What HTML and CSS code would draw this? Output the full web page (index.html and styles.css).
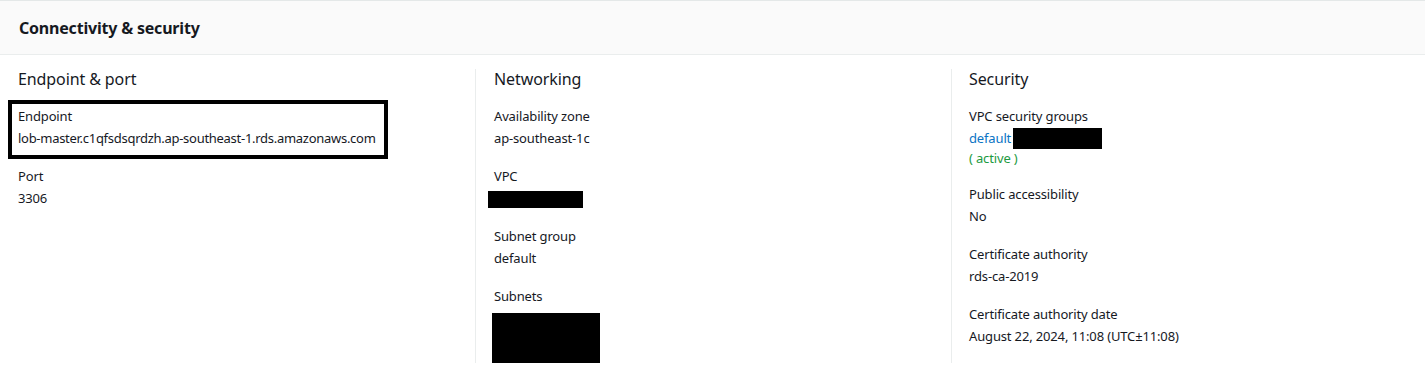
FILE: index.html
```html
<!DOCTYPE html>
<html>
<head>
<meta charset="utf-8">
<link rel="stylesheet" href="styles.css">
</head>
<body>
<div class="panel">
  <div class="panel-header"><h2>Connectivity &amp; security</h2></div>
  <div class="columns">
    <div class="col">
      <h3>Endpoint &amp; port</h3>
      <div class="item highlight">
        <div class="label">Endpoint</div>
        <div class="value endpoint">lob-master.c1qfsdsqrdzh.ap-southeast-1.rds.amazonaws.com</div>
      </div>
      <div class="item">
        <div class="label">Port</div>
        <div class="value">3306</div>
      </div>
    </div>
    <div class="col">
      <h3>Networking</h3>
      <div class="item">
        <div class="label">Availability zone</div>
        <div class="value">ap-southeast-1c</div>
      </div>
      <div class="item">
        <div class="label">VPC</div>
        <div class="value pad"><div class="redact vpc"></div></div>
      </div>
      <div class="item">
        <div class="label">Subnet group</div>
        <div class="value">default</div>
      </div>
      <div class="item">
        <div class="label">Subnets</div>
        <div class="subnets-wrap"><div class="redact subnets"></div></div>
      </div>
    </div>
    <div class="col">
      <h3>Security</h3>
      <div class="item">
        <div class="label">VPC security groups</div>
        <div class="value sg"><a class="link">default</a><span class="redact sgbox"></span></div>
        <div class="status">( active )</div>
      </div>
      <div class="item">
        <div class="label">Public accessibility</div>
        <div class="value">No</div>
      </div>
      <div class="item">
        <div class="label">Certificate authority</div>
        <div class="value">rds-ca-2019</div>
      </div>
      <div class="item">
        <div class="label">Certificate authority date</div>
        <div class="value">August 22, 2024, 11:08 (UTC±11:08)</div>
      </div>
    </div>
  </div>
</div>
</body>
</html>
```
FILE: styles.css
```css
* { box-sizing: border-box; }
body {
  margin: 0;
  background: #fff;
  font-family: "Noto Sans", "Open Sans", sans-serif;
  color: #16191f;
  font-size: 13px;
  letter-spacing: -0.15px;
}
.panel {
  border-top: 1px solid #e4e8e8;
}
.panel-header {
  background: #fafafa;
  border-bottom: 1px solid #eaeded;
  height: 54px;
  padding: 0 19px;
  display: flex;
  align-items: center;
}
.panel-header h2 {
  margin: 0;
  font-size: 16px;
  font-weight: 700;
  line-height: 20px;
  letter-spacing: -0.2px;
}
.columns {
  display: grid;
  grid-template-columns: 475px 476px 1fr;
  margin-top: 14px;
}
.col {
  padding-left: 18px;
  height: 294px;
}
.col:last-child { padding-left: 17px; }
.col + .col {
  border-left: 1px solid #eaeded;
}
.col h3 {
  margin: 0 0 16px;
  font-size: 16px;
  font-weight: 400;
  line-height: 20px;
  letter-spacing: -0.1px;
}
.item {
  margin-bottom: 16px;
}
.label, .value, .status {
  line-height: 22px;
  white-space: nowrap;
}
.value { height: 22px; }
.endpoint { letter-spacing: -0.28px; }
.pad { padding-top: 4px; }
.highlight {
  width: 380px;
  margin-left: -10px;
  margin-top: -5px;
  margin-bottom: 6px;
  padding: 1px 6px 6px 6px;
  border: 4px solid #000;
}
.redact { background: #000; display: block; }
.vpc { width: 95px; height: 17px; margin-left: -6px; }
.subnets-wrap { padding-top: 6px; }
.subnets { width: 108px; height: 50px; margin-left: -2px; }
.sg { display: flex; align-items: center; }
.link { color: #0a74c4; }
.sgbox { display: inline-block; width: 89px; height: 21px; margin-left: 2px; }
.status { color: #1d9a3f; line-height: 18px; height: 18px; }
```
